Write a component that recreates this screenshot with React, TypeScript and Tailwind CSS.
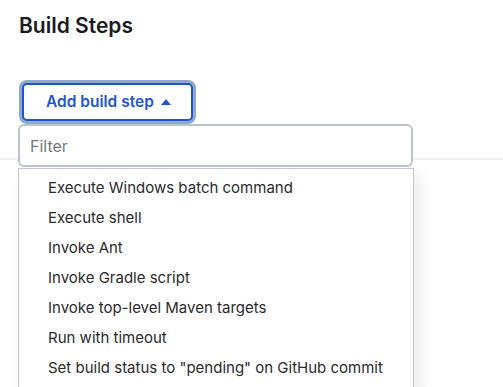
import React, { useState } from "react";

const steps = [
  "Execute Windows batch command",
  "Execute shell",
  "Invoke Ant",
  "Invoke Gradle script",
  "Invoke top-level Maven targets",
  "Run with timeout",
  'Set build status to "pending" on GitHub commit',
];

const App: React.FC = () => {
  const [filter, setFilter] = useState("");

  const visible = steps.filter((s) =>
    s.toLowerCase().includes(filter.toLowerCase())
  );

  return (
    <div className="relative h-[387px] w-[503px] overflow-hidden bg-white font-['Inter',sans-serif]">
      {/* Section header */}
      <div className="pl-[19px] pt-3">
        <h2 className="text-[21px] leading-7 font-semibold text-[#1b1b1f]">
          Build Steps
        </h2>
        <button className="mt-[43px] ml-[3px] flex h-[38px] items-center gap-[7px] rounded-[5px] border-2 border-[#1f55d2] bg-white pl-[22px] pr-[20px] text-[15.5px] font-semibold text-[#1f55d2] ring-[3px] ring-[#8eaacb]">
          Add build step
          <svg width="10" height="6" viewBox="0 0 10 6" className="mt-[-1px]">
            <path d="M0 6 L5 0 L10 6 Z" fill="currentColor" />
          </svg>
        </button>
      </div>

      {/* Section divider behind the popup */}
      <div className="mt-[37px] h-[2px] w-full bg-[#f1f1f6]" />

      {/* Dropdown popup */}
      <div className="absolute left-[18px] top-[124px] w-[396px]">
        <input
          value={filter}
          onChange={(e) => setFilter(e.target.value)}
          placeholder="Filter"
          className="block h-[43px] w-[395px] rounded-md border-2 border-[#bac4cc] bg-white px-[10px] text-base text-[#222] placeholder-[#7a7a7a] outline-none"
        />
        <ul className="mt-px w-[396px] border border-[#c3c9ce] bg-white pt-1 pb-2 shadow-[6px_6px_14px_rgba(0,0,0,0.08)]">
          {visible.map((s) => (
            <li
              key={s}
              className="flex h-[30px] items-center pl-[29px] text-[15px] text-[#2b2b2b]"
            >
              {s}
            </li>
          ))}
        </ul>
      </div>
    </div>
  );
};

export default App;
